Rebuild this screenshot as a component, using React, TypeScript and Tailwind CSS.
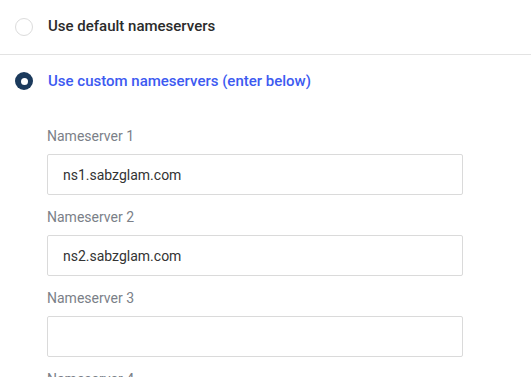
export default function App() {
  const fields = [
    { label: "Nameserver 1", value: "ns1.sabzglam.com" },
    { label: "Nameserver 2", value: "ns2.sabzglam.com" },
    { label: "Nameserver 3", value: "" },
    { label: "Nameserver 4", value: "" },
  ];

  return (
    <div className="h-[377px] w-[531px] overflow-hidden bg-white font-['Roboto',sans-serif]">
      <div className="flex h-[55px] items-center gap-[15px] border-b border-[#e3e3e3] px-[15px] pb-px">
        <span className="h-[18px] w-[18px] rounded-full border border-[#dcdcdc] bg-white" />
        <span className="text-[15px] font-medium text-[#2b2b2b]">Use default nameservers</span>
      </div>
      <div className="flex h-[52px] items-center gap-[15px] px-[15px]">
        <span className="flex h-[18px] w-[18px] items-center justify-center rounded-full bg-[#1b3a5c]">
          <span className="h-[7px] w-[7px] rounded-full bg-white" />
        </span>
        <span className="text-[15px] font-medium text-[#3d5af1]">Use custom nameservers (enter below)</span>
      </div>
      <div className="pl-[47px] pr-[68px] pt-[19px]">
        {fields.map((f) => (
          <div key={f.label} className="mb-[12px]">
            <label className="mb-[8px] block h-[20px] text-[14px] leading-[20px] text-[#7b7f88]">{f.label}</label>
            <input
              readOnly
              value={f.value}
              className="h-[41px] w-full rounded-[2px] border border-[#dadada] px-[15px] text-[14px] text-[#333] outline-none"
            />
          </div>
        ))}
      </div>
    </div>
  );
}
